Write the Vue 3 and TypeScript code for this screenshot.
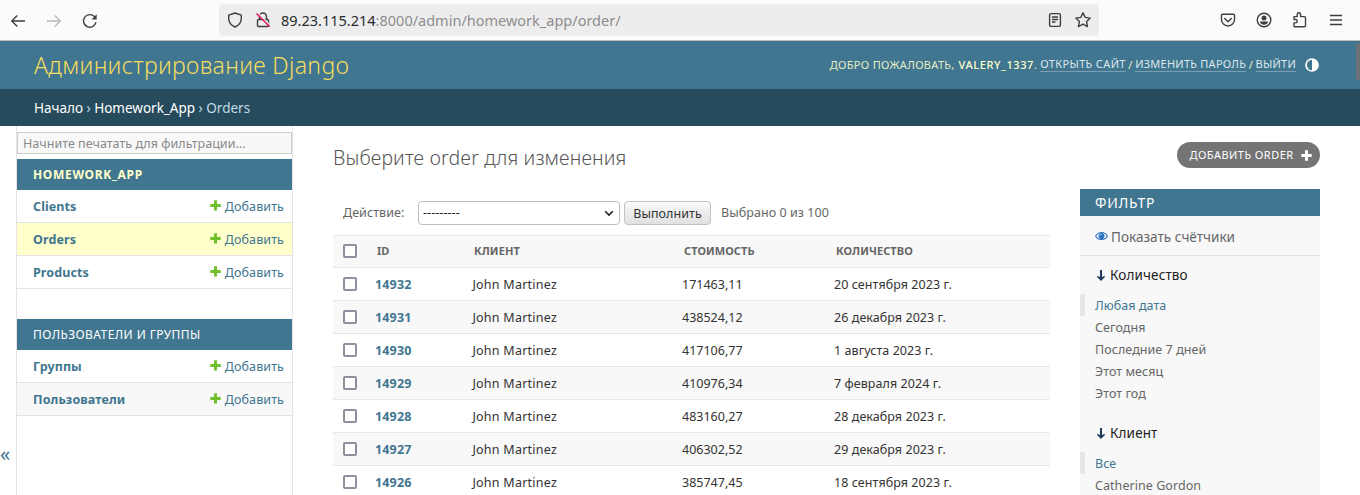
<script setup lang="ts">
interface Order {
  id: number
  client: string
  cost: string
  date: string
}

interface Module {
  name: string
  current: boolean
  models: { name: string; state: string }[]
}

const modules: Module[] = [
  {
    name: 'HOMEWORK_APP',
    current: true,
    models: [
      { name: 'Clients', state: '' },
      { name: 'Orders', state: 'selected' },
      { name: 'Products', state: '' },
    ],
  },
  {
    name: 'ПОЛЬЗОВАТЕЛИ И ГРУППЫ',
    current: false,
    models: [
      { name: 'Группы', state: '' },
      { name: 'Пользователи', state: 'even' },
    ],
  },
]

const orders: Order[] = [
  { id: 14932, client: 'John Martinez', cost: '171463,11', date: '20 сентября 2023 г.' },
  { id: 14931, client: 'John Martinez', cost: '438524,12', date: '26 декабря 2023 г.' },
  { id: 14930, client: 'John Martinez', cost: '417106,77', date: '1 августа 2023 г.' },
  { id: 14929, client: 'John Martinez', cost: '410976,34', date: '7 февраля 2024 г.' },
  { id: 14928, client: 'John Martinez', cost: '483160,27', date: '28 декабря 2023 г.' },
  { id: 14927, client: 'John Martinez', cost: '406302,52', date: '29 декабря 2023 г.' },
  { id: 14926, client: 'John Martinez', cost: '385747,45', date: '18 сентября 2023 г.' },
]

const filters = [
  { title: 'Количество', items: ['Любая дата', 'Сегодня', 'Последние 7 дней', 'Этот месяц', 'Этот год'] },
  { title: 'Клиент', items: ['Все', 'Catherine Gordon'] },
]
</script>

<template>
  <div class="window">
    <div class="toolbar">
      <div class="nav">
        <svg width="16" height="16" viewBox="0 0 16 16"><path d="M15 8H2M7.300 2.500 1.800 8l5.500 5.500" /></svg>
        <svg class="dim" width="16" height="16" viewBox="0 0 16 16"><path d="M1 8h13M8.700 2.500 14.200 8l-5.500 5.500" /></svg>
        <svg width="16" height="16" viewBox="0 0 16 16"><path d="M14 9.200A6.300 6.300 0 1 1 12.600 3.800" /><path class="solid" d="M14.700 1.300v5.200H9.500z" /></svg>
      </div>
      <div class="urlbar">
        <svg width="16" height="16" viewBox="0 0 16 16"><path d="M8 1 14.300 3.200v3.300c0 4-2.500 6.800-6.300 8.500C4.200 13.300 1.700 10.500 1.700 6.500V3.200z" stroke-linejoin="round" /></svg>
        <svg class="lock" width="16" height="16" viewBox="0 0 16 16">
          <path d="M4.500 7V4.500a3.500 3.500 0 0 1 7 0V7M3.500 7.500h9a1 1 0 0 1 1 1v5a1 1 0 0 1-1 1h-9a1 1 0 0 1-1-1v-5a1 1 0 0 1 1-1z" />
          <path class="gap" d="M2.500 0.800 16 14" />
          <path class="slash" d="M1.500 1.500 14.800 14.800" />
        </svg>
        <span class="url"><b>89.23.115.214</b>:8000/admin/homework_app/order/</span>
        <svg class="reader" width="16" height="16" viewBox="0 0 16 16"><rect x="2.600" y="1.600" width="10.800" height="12.800" rx="1.500" /><path d="M5 5h6M5 7.500h6M5 10h3.500" /></svg>
        <svg class="star" width="18" height="18" viewBox="0 0 18 18"><path d="M9 1.800l2.200 4.600 5 .7-3.600 3.500.9 5L9 13.200l-4.500 2.400.9-5L1.800 7.100l5-.7z" stroke-linejoin="round" /></svg>
      </div>
      <div class="tools">
        <svg width="16" height="16" viewBox="0 0 16 16"><path d="M2.700 2.200h10.600a1.200 1.200 0 0 1 1.200 1.200V7.500a6.500 6.500 0 0 1-13 0V3.400a1.200 1.200 0 0 1 1.200-1.200z" /><path d="M4.700 6.500 8 9.700l3.300-3.200" stroke-linecap="round" /></svg>
        <svg width="16" height="16" viewBox="0 0 16 16"><circle cx="8" cy="8" r="6.800" /><circle class="solid" cx="8" cy="6" r="2.500" /><path class="solid" d="M3.800 9.500h8.400c-.3 2-2 3.200-4.200 3.200S4.100 11.500 3.800 9.500z" /></svg>
        <svg width="16" height="16" viewBox="0 0 16 16"><path d="M2 4.600h3.200V2.500a1.700 1.700 0 0 1 3.400 0v2.100h3.900a1 1 0 0 1 1 1v8.200a1 1 0 0 1-1 1H3a1 1 0 0 1-1-1v-2.900h1.500a1.700 1.700 0 0 0 0-3.400H2z" stroke-linejoin="round" /></svg>
        <svg width="16" height="16" viewBox="0 0 16 16"><path d="M2 3.500h12M2 8h12M2 12.500h12" /></svg>
      </div>
    </div>

    <header class="header">
      <h1>Администрирование Django</h1>
      <div class="user">
        <span class="welcome">ДОБРО ПОЖАЛОВАТЬ,</span>
        <b>VALERY_1337</b><i>.</i>
        <a class="l-site">ОТКРЫТЬ САЙТ</a><i class="sep">/</i><a class="l-pass">ИЗМЕНИТЬ ПАРОЛЬ</a><i class="sep">/</i><a class="l-out">ВЫЙТИ</a>
        <svg width="14" height="14" viewBox="0 0 14 14"><circle cx="7" cy="7" r="6" fill="none" stroke="#fff" stroke-width="1.700" /><path d="M7 1v12A6 6 0 0 0 7 1z" fill="#fff" /></svg>
      </div>
      <span class="scroll" />
    </header>
    <nav class="crumbs"><a>Начало</a> › <a>Homework_App</a> › <span>Orders</span></nav>

    <div class="body">
      <div class="toggle"><span>«</span></div>
      <aside class="sidebar">
        <div class="search"><span>Начните печатать для фильтрации...</span></div>
        <section v-for="m in modules" :key="m.name" class="module">
          <h2 :class="{ current: m.current }"><span>{{ m.name }}</span></h2>
          <div v-for="r in m.models" :key="r.name" class="model" :class="r.state">
            <b>{{ r.name }}</b>
            <a class="add"><svg width="11" height="11" viewBox="0 0 11 11"><path d="M4 .2h3V4h3.700v3H7v3.500H4V7H.3V4H4z" fill="#70bf2b" /></svg><span>Добавить</span></a>
          </div>
        </section>
      </aside>

      <main class="main">
        <div class="titlebar">
          <h2>Выберите order для изменения</h2>
          <a class="addorder"><span>ДОБАВИТЬ ORDER</span><svg width="11" height="11" viewBox="0 0 11 11"><path d="M4 .3h3V4h3.700v3H7v3.700H4V7H.3V4H4z" fill="#fff" /></svg></a>
        </div>
        <div class="columns">
          <div class="results">
            <div class="actions">
              <label>Действие:</label>
              <div class="select"><span>---------</span><svg width="10" height="7" viewBox="0 0 10 7"><path d="M1.200 1.200 5 5l3.800-3.800" fill="none" stroke="#222" stroke-width="1.600" /></svg></div>
              <div class="button"><span>Выполнить</span></div>
              <span class="count">Выбрано 0 из 100</span>
            </div>
            <div class="row head">
              <i class="check" /><span>ID</span><span>КЛИЕНТ</span><span>СТОИМОСТЬ</span><span>КОЛИЧЕСТВО</span>
            </div>
            <div v-for="o in orders" :key="o.id" class="row">
              <i class="check" /><b>{{ o.id }}</b><span class="client">{{ o.client }}</span><span>{{ o.cost }}</span><span class="date">{{ o.date }}</span>
            </div>
          </div>
          <aside class="filter">
            <h2><span>ФИЛЬТР</span></h2>
            <div class="facets">
              <svg width="13" height="11" viewBox="0 0 13 11"><path d="M.6 5.300C3.300.3 9.700.3 12.400 5.300 9.700 9.700 3.300 9.700.6 5.300z" fill="#fff" stroke="#2b70bf" stroke-width="1.100" /><circle cx="6.500" cy="4.900" r="3" fill="#2b70bf" /><path d="M5 4.600A1.600 1.600 0 0 1 6.500 3.200" fill="none" stroke="#fff" stroke-width=".7" /></svg>
              <span>Показать счётчики</span>
            </div>
            <section v-for="f in filters" :key="f.title">
              <h3><svg width="8" height="11" viewBox="0 0 8 11"><path d="M4 0v8" fill="none" stroke="#203b5c" stroke-width="2" /><path d="M.3 5.800 4 7.400l3.700-1.600v1.400L4 11 .3 7.200z" fill="#203b5c" /></svg><span>{{ f.title }}</span></h3>
              <div v-for="(item, i) in f.items" :key="item" class="choice" :class="{ on: i === 0 }"><span>{{ item }}</span></div>
            </section>
          </aside>
        </div>
      </main>
    </div>
  </div>
</template>

<style>
body { overflow: hidden; background: #fff; }
</style>

<style scoped>
* { box-sizing: border-box; }
.window { width: 1360px; height: 495px; overflow: hidden; display: flex; flex-direction: column; font: 12.500px/20px "Noto Sans", "Open Sans", sans-serif; color: #333; white-space: nowrap; background: #fff; }
svg { display: block; flex: none; }
h1, h2, h3 { margin: 0; font-weight: 400; }
i { font-style: normal; }

.toolbar { height: 41px; flex: none; display: flex; align-items: center; background: #fbfbfb; border-bottom: 1px solid #bdbdbd; }
.toolbar svg { fill: none; stroke: #3f3f43; stroke-width: 1.400; }
.toolbar .solid { fill: #3f3f43; stroke: none; }
.nav { display: flex; gap: 20px; width: 219px; padding: 1px 0 0 10px; }
.toolbar .dim { stroke: #b7b7b9; }
.urlbar { width: 880px; height: 32px; border-radius: 4px; background: #ededed; display: flex; align-items: center; padding: 0 7px 0 8px; }
.lock { margin-left: 12px; }
.toolbar .lock .gap { stroke: #ededed; stroke-width: 1.500; }
.toolbar .lock .slash { stroke: #e8174f; stroke-width: 1.500; }
.url { margin-left: 10px; flex: 1; font-size: 14.500px; color: #8d8d90; }
.url b { font-weight: 400; color: #2b2b2f; }
.reader { margin-right: 11px; }
.tools { display: flex; gap: 20px; margin-left: 121px; }

.header { height: 48px; flex: none; background: #417690; display: flex; align-items: center; padding-left: 34px; }
h1 { font-size: 23px; font-weight: 300; letter-spacing: .34px; color: #f5dd5d; line-height: 49px; flex: 1; }
.user { display: flex; align-items: center; font-size: 11px; letter-spacing: .25px; color: #e3ecc6; line-height: 14px; height: 15px; margin-top: -1px; }
.welcome { letter-spacing: .33px; }
.user b { color: #ffc; font-weight: 500; margin-left: 4px; letter-spacing: .6px; }
.user a { color: #dce7ec; border-bottom: 1px solid #7b9eb0; }
.user .l-site { margin-left: 3px; letter-spacing: .36px; }
.user .sep { margin: 0 2.500px; }
.user svg { margin: 1px 0 0 9px; }
.scroll { width: 4px; height: 37px; border-radius: 2px; background: #6c7276; margin-left: 37px; align-self: flex-end; margin-bottom: 9px; }

.crumbs { height: 37px; flex: none; line-height: 38px; background: #264b5d; color: #c4dce8; padding-left: 34px; font-size: 13.500px; }
.crumbs a { color: #fff; }

.body { display: flex; flex: 1; min-height: 0; }
.toggle { width: 16px; flex: none; color: #417690; font-size: 20px; padding-top: 318px; }
.sidebar { width: 277px; flex: none; border: 1px solid #e4e4e4; border-width: 0 1px; padding-top: 6px; }
.search { height: 22px; border: 1px solid #ccc; background: #f8f8f8; color: #8a8a8a; padding-left: 5px; line-height: 21px; margin-bottom: 5px; letter-spacing: .03px; }
.module { margin-bottom: 30px; }
.module h2 { height: 31px; line-height: 31px; background: #417690; color: #fff; font-size: 12px; letter-spacing: .43px; padding-left: 16px; }
.module h2.current { color: #ffc; font-weight: 700; letter-spacing: .68px; }
.model { height: 33px; border-bottom: 1px solid #e4e4e4; display: flex; align-items: center; justify-content: space-between; padding: 1px 8px 0 16px; color: #417690; letter-spacing: .1px; }
.selected { background: #ffc; }
.even { background: #f8f8f8; }
.add { display: flex; align-items: center; gap: 4px; }
.add svg { margin-top: -3px; }

.main { flex: 1; padding: 16px 40px 0; }
.titlebar { display: flex; justify-content: space-between; height: 47px; }
.titlebar h2 { font-size: 19.500px; font-weight: 300; letter-spacing: .13px; color: #555; line-height: 31px; }
.addorder { width: 143px; height: 26px; border-radius: 13px; background: #747474; color: #fff; display: flex; align-items: center; justify-content: space-between; padding: 0 8px 0 12.500px; font-size: 11px; letter-spacing: .45px; }
.columns { display: flex; gap: 30px; }
.results { width: 717px; padding-top: 12px; }
.actions { height: 24px; margin-bottom: 10px; display: flex; align-items: center; padding-left: 10px; color: #666; letter-spacing: .06px; }
.actions label { width: 75px; }
.select { width: 202px; height: 24px; border: 1px solid #bdbdbd; border-radius: 4px; display: flex; align-items: center; justify-content: space-between; padding: 0 5px 0 4px; color: #222; }
.button { width: 87px; height: 24px; margin: 0 10px 0 4px; border: 1px solid #c2c2c2; border-radius: 4px; background: linear-gradient(#fafafa, #e0e0e0); color: #333; text-align: center; line-height: 23px; }
.row { height: 33px; display: grid; grid-template-columns: 42px 97px 210px 152px 1fr; align-items: center; border-bottom: 1px solid #e8e8e8; background: #fff; }
.row:not(.head) > :not(.check) { padding-top: 2px; }
.row:nth-child(even):not(.head) { background: #f8f8f8; }
.row b { color: #417690; letter-spacing: .15px; }
.client { letter-spacing: .25px; padding-left: .4px; }
.date { letter-spacing: .06px; }
.row.head { border-top: 1px solid #e8e8e8; background: #f8f8f8; font-size: 11px; font-weight: 700; color: #666; padding-bottom: 1px; letter-spacing: .08px; }
.head span { padding-left: 2px; }
.check { width: 14px; height: 14px; border: 2px solid #8f8f9d; border-radius: 2px; background: #fff; margin-left: 10px; }

.filter { width: 240px; height: 400px; background: #f8f8f8; }
.filter h2 { height: 27px; line-height: 28px; background: #417690; color: #fff; font-size: 14px; letter-spacing: .75px; padding-left: 15px; }
.facets { height: 40px; border-bottom: 1px solid #e4e4e4; display: flex; align-items: center; gap: 3px; padding: 3px 0 0 15px; color: #666; font-size: 13.500px; letter-spacing: .03px; }
.facets svg { margin-top: -1px; }
.filter h3 { display: flex; align-items: center; gap: 5px; height: 38px; padding-left: 17px; font-size: 13.500px; letter-spacing: .13px; color: #222; }
.filter section { margin-bottom: 10px; }
.choice { height: 22px; border-left: 5px solid transparent; padding-left: 10px; line-height: 24px; color: #666; letter-spacing: .06px; }
.choice.on { border-color: #e6e6e6; color: #417690; }
</style>
